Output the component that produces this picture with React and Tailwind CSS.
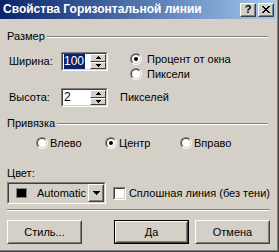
import React from "react";

const sunken =
  "border border-t-[#808080] border-l-[#808080] border-b-white border-r-white";
const sunkenInner =
  "border border-t-[#404040] border-l-[#404040] border-b-[#d4d0c8] border-r-[#d4d0c8]";
const raised =
  "border border-t-white border-l-white border-b-[#404040] border-r-[#404040]";
const raisedInner =
  "border border-t-[#d4d0c8] border-l-[#d4d0c8] border-b-[#808080] border-r-[#808080]";

function Radio({ checked }) {
  return (
    <span className={"inline-flex w-[12px] h-[12px] rounded-full shrink-0 " + sunken}>
      <span
        className={
          "flex-1 rounded-full bg-white flex items-center justify-center " + sunkenInner
        }
      >
        {checked && <span className="w-[4px] h-[4px] rounded-full bg-black" />}
      </span>
    </span>
  );
}

function GroupHeader({ children }) {
  return (
    <div className="flex items-center h-[13px] pr-[2px]">
      <span className="pr-[2px]">{children}</span>
      <span className="flex-1 h-[2px] border-t border-t-[#808080] border-b border-b-white mt-[1px]" />
    </div>
  );
}

function Spinner() {
  return (
    <div className="flex flex-col w-[16px] h-full">
      {[0, 1].map((i) => (
        <div
          key={i}
          className={"flex-1 bg-[#d4d0c8] flex items-center justify-center " + raised}
        >
          <svg width="5" height="3" viewBox="0 0 5 3">
            {i === 0 ? (
              <path d="M2 0h1v1h1v1h1v1H0V2h1V1h1z" fill="#000" />
            ) : (
              <path d="M0 0h5v1H4v1H3v1H2V2H1V1H0z" fill="#000" />
            )}
          </svg>
        </div>
      ))}
    </div>
  );
}

function NumberField({ value, selected }) {
  return (
    <div className={"w-[47px] h-[19px] flex shrink-0 " + sunken}>
      <div className={"flex-1 flex bg-white " + sunkenInner}>
        <div className="flex-1 flex items-center pl-[1px]">
          {selected ? (
            <span className="bg-[#0a246a] text-white text-[12px] leading-[15px] pr-[1px]">
              {value}
            </span>
          ) : (
            <span className="text-[12px] leading-[15px]">{value}</span>
          )}
        </div>
        <Spinner />
      </div>
    </div>
  );
}

function Button({ children, isDefault }) {
  return (
    <div
      className={
        "w-[75px] h-[24px] " +
        (isDefault ? "border border-black flex" : "flex")
      }
    >
      <div className={"flex-1 flex " + raised}>
        <div
          className={"flex-1 flex items-center justify-center bg-[#d4d0c8] " + raisedInner}
        >
          {children}
        </div>
      </div>
    </div>
  );
}

export default function App() {
  return (
    <div className="w-[279px] h-[252px] bg-[#d4d0c8] overflow-hidden flex flex-col font-['Liberation_Sans',Arial,sans-serif] text-[11px] leading-[13px] text-black border-r border-b border-r-[#404040] border-b-[#404040]">
      <div className="flex-1 flex flex-col border-r border-b border-r-[#808080] border-b-[#808080] pr-[1px]">
        <div className="h-[19px] flex items-center justify-between bg-gradient-to-r from-[#0a246a] to-[#a6caf0] pl-[3px] pr-[2px]">
          <span className="text-white font-bold text-[12px]">
            Свойства Горизонтальной линии
          </span>
          <div className="flex gap-[2px]">
            <div className={"w-[16px] h-[14px] flex " + raised}>
              <div
                className={
                  "flex-1 bg-[#d4d0c8] flex items-center justify-center font-bold text-[11px] leading-none " +
                  raisedInner
                }
              >
                ?
              </div>
            </div>
            <div className={"w-[16px] h-[14px] flex " + raised}>
              <div
                className={
                  "flex-1 bg-[#d4d0c8] flex items-center justify-center " + raisedInner
                }
              >
                <svg width="8" height="7" viewBox="0 0 8 7">
                  <path
                    d="M0 0h2v1h1v1h2V1h1V0h2v1H7v1H6v1H5v1h1v1h1v1h1v1H6V6H5V5H3v1H2v1H0V6h1V5h1V4h1V3H2V2H1V1H0z"
                    fill="#000"
                  />
                </svg>
              </div>
            </div>
          </div>
        </div>

        <div className="flex flex-col pl-[7px] pr-[6px]">
          <div className="mt-[11px]">
            <GroupHeader>Размер</GroupHeader>
          </div>

          <div className="flex items-start mt-[9px] pl-[2px]">
            <div className="flex items-center h-[19px]">
              <span className="w-[52px]">Ширина:</span>
              <NumberField value="100" selected />
            </div>
            <div className="flex flex-col ml-[22px] mt-[1px] gap-[3px]">
              <div className="flex items-center gap-[5px] h-[12px]">
                <Radio checked />
                <span className="whitespace-nowrap">Процент от окна</span>
              </div>
              <div className="flex items-center gap-[5px] h-[12px]">
                <Radio />
                <span>Пиксели</span>
              </div>
            </div>
          </div>

          <div className="flex items-center h-[19px] mt-[8px] pl-[2px]">
            <span className="w-[52px]">Высота:</span>
            <NumberField value="2" />
            <span className="ml-[12px]">Пикселей</span>
          </div>

          <div className="mt-[10px]">
            <GroupHeader>Привязка</GroupHeader>
          </div>

          <div className="flex items-center h-[12px] mt-[7px] pl-[29px]">
            <div className="flex items-center gap-[2px] w-[69px]">
              <Radio />
              <span>Влево</span>
            </div>
            <div className="flex items-center gap-[2px] w-[75px]">
              <Radio checked />
              <span>Центр</span>
            </div>
            <div className="flex items-center gap-[2px]">
              <Radio />
              <span>Вправо</span>
            </div>
          </div>

          <div className="mt-[18px]">Цвет:</div>

          <div className="flex items-center mt-[2px]">
            <div className={"w-[103px] h-[22px] flex " + sunken}>
              <div className={"flex-1 flex items-center bg-[#d4d0c8] " + sunkenInner}>
                <span className="w-[11px] h-[10px] bg-black ml-[7px] border border-[#808080]" />
                <span className="ml-[10px] flex-1">Automatic</span>
                <div className={"w-[16px] h-full flex " + raised}>
                  <div
                    className={
                      "flex-1 bg-[#d4d0c8] flex items-center justify-center " + raisedInner
                    }
                  >
                    <svg width="7" height="4" viewBox="0 0 7 4">
                      <path d="M0 0h7v1H6v1H5v1H4v1H3V3H2V2H1V1H0z" fill="#000" />
                    </svg>
                  </div>
                </div>
              </div>
            </div>
            <div className={"w-[13px] h-[13px] ml-[7px] flex " + sunken}>
              <div className={"flex-1 bg-white " + sunkenInner} />
            </div>
            <span className="ml-[3px] whitespace-nowrap">Сплошная линия (без тени)</span>
          </div>

          <div className="h-[2px] border-t border-t-[#808080] border-b border-b-white mt-[5px]" />

          <div className="flex items-center mt-[9px]">
            <Button>Стиль...</Button>
            <div className="flex-1" />
            <Button isDefault>Да</Button>
            <div className="w-[6px]" />
            <Button>Отмена</Button>
          </div>
        </div>
      </div>
    </div>
  );
}
